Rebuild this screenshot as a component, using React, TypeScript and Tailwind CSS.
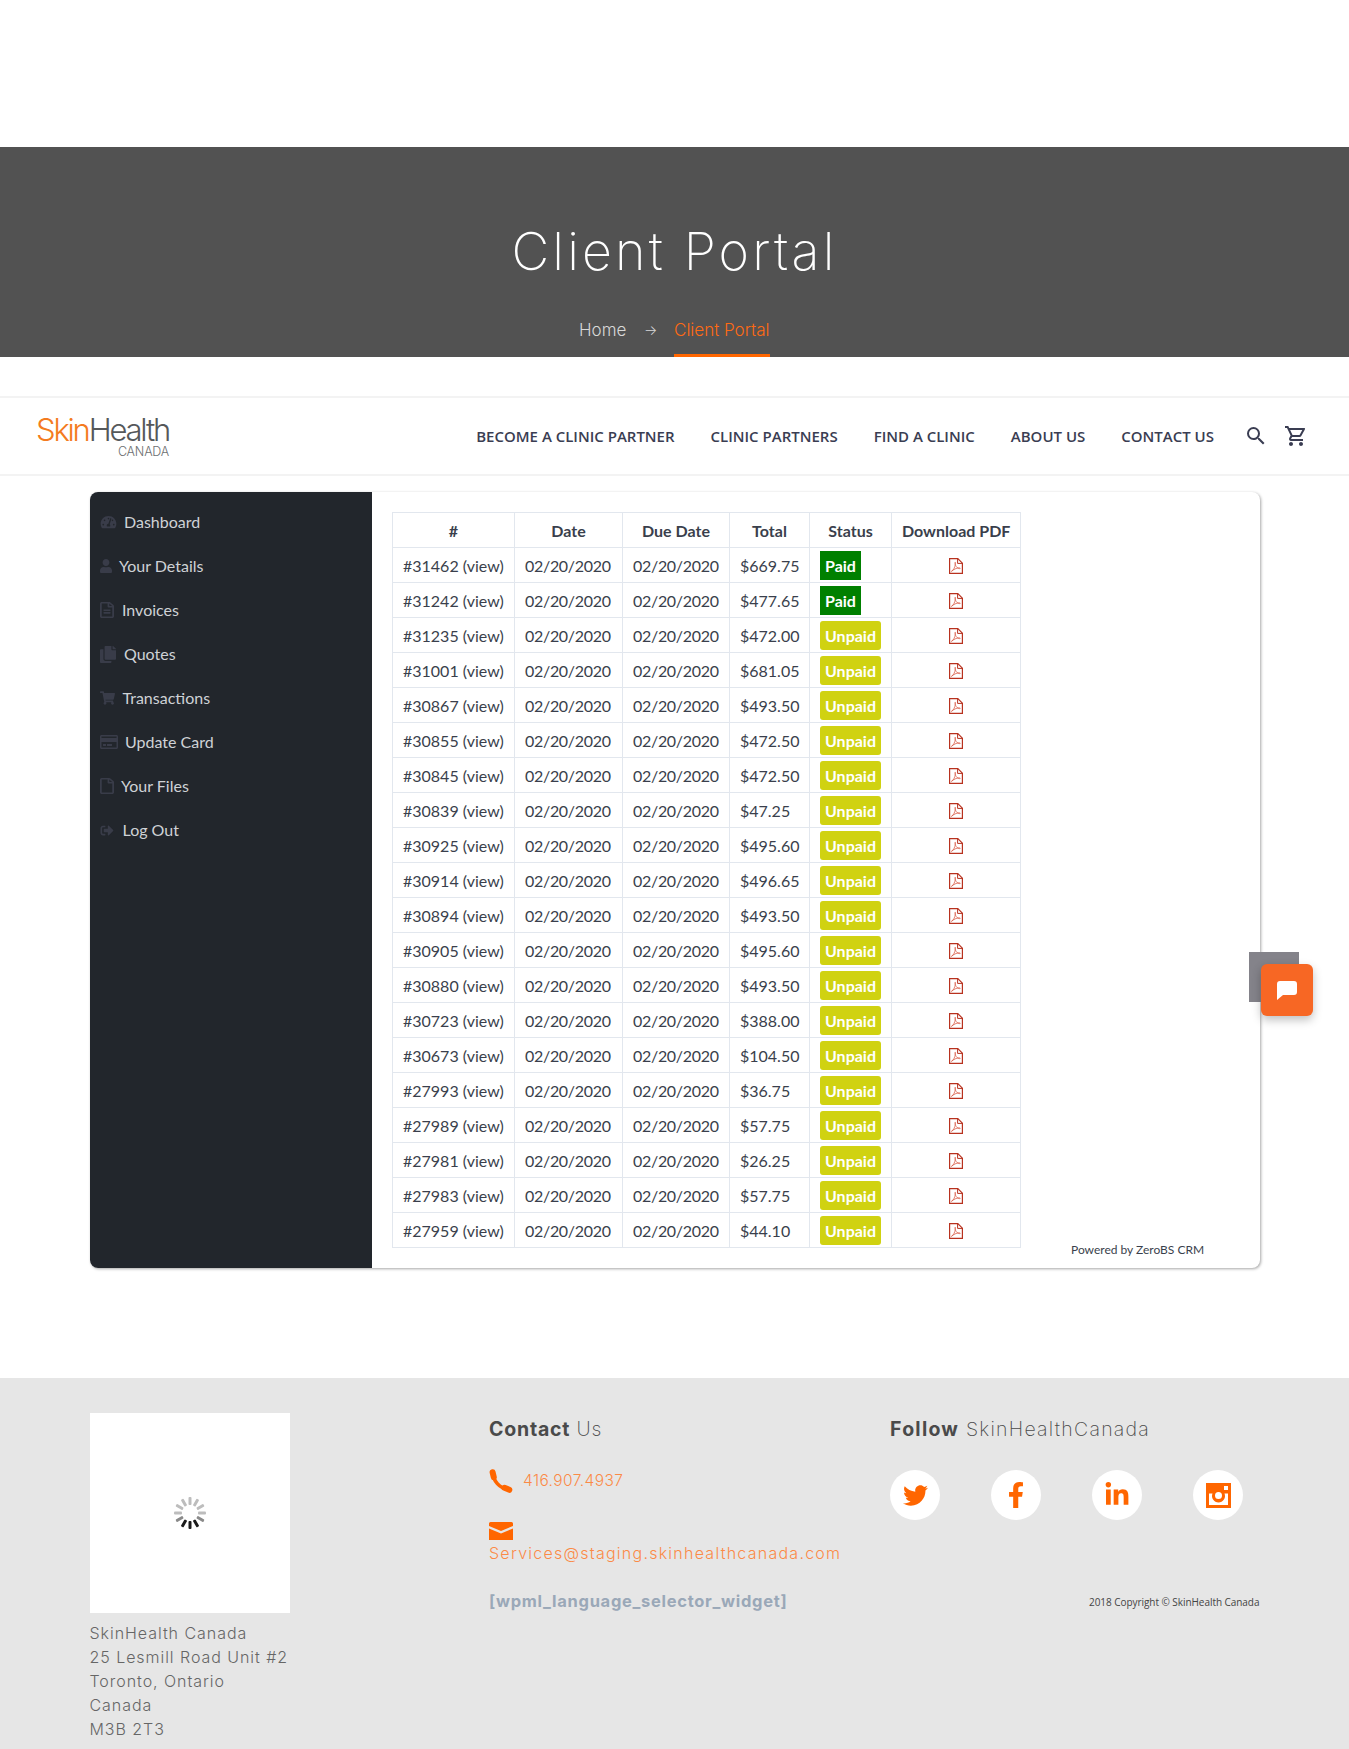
import React from 'react';
import {
  FaTachometerAlt, FaUser, FaRegFileAlt, FaCopy, FaShoppingCart, FaRegCreditCard, FaRegFile,
  FaSignOutAlt, FaTwitter, FaFacebookF, FaLinkedinIn,
} from 'react-icons/fa';
import { MdSearch, MdOutlineShoppingCart } from 'react-icons/md';

const poppins = 'font-["Inter",sans-serif]';

const menu = [
  { label: 'Dashboard', icon: <FaTachometerAlt className="w-[17px] h-[14px]" />, slot: 'w-[24px]' },
  { label: 'Your Details', icon: <FaUser className="w-[12px] h-[14px]" preserveAspectRatio="none" />, slot: 'w-[19px]' },
  { label: 'Invoices', icon: <FaRegFileAlt className="w-[14px] h-[16px]" preserveAspectRatio="none" />, slot: 'w-[22px]' },
  { label: 'Quotes', icon: <FaCopy className="w-[16px] h-[17px]" preserveAspectRatio="none" />, slot: 'w-[24px]' },
  { label: 'Transactions', icon: <FaShoppingCart className="w-[15px] h-[14px]" />, slot: 'w-[22.5px]' },
  { label: 'Update Card', icon: <FaRegCreditCard className="w-[18px] h-[16px]" />, slot: 'w-[25px]' },
  { label: 'Your Files', icon: <FaRegFile className="w-[14px] h-[16px]" preserveAspectRatio="none" />, slot: 'w-[21px]' },
  { label: 'Log Out', icon: <FaSignOutAlt className="w-[14px] h-[13px]" />, slot: 'w-[22.5px]' },
];

const invoices: [string, string, boolean][] = [
  ['#31462', '$669.75', true],
  ['#31242', '$477.65', true],
  ['#31235', '$472.00', false],
  ['#31001', '$681.05', false],
  ['#30867', '$493.50', false],
  ['#30855', '$472.50', false],
  ['#30845', '$472.50', false],
  ['#30839', '$47.25', false],
  ['#30925', '$495.60', false],
  ['#30914', '$496.65', false],
  ['#30894', '$493.50', false],
  ['#30905', '$495.60', false],
  ['#30880', '$493.50', false],
  ['#30723', '$388.00', false],
  ['#30673', '$104.50', false],
  ['#27993', '$36.75', false],
  ['#27989', '$57.75', false],
  ['#27981', '$26.25', false],
  ['#27983', '$57.75', false],
  ['#27959', '$44.10', false],
];

const cell = 'border border-[#e2e7ee] px-[10px] pt-[2px] pb-0 h-[35px] whitespace-nowrap';

const Spinner = () => (
  <svg width="34" height="34" viewBox="-17 -17 34 34" aria-hidden="true">
    {Array.from({ length: 12 }).map((_, i) => {
      const dark = i >= 5 && i <= 7;
      return (
        <rect
          key={i}
          x="-1.5"
          y="-16"
          width="3"
          height="8"
          rx="1"
          transform={`rotate(${i * 30})`}
          fill={dark ? '#1c1c1c' : i === 4 || i === 8 ? '#8a8a8a' : '#bdbdbd'}
        />
      );
    })}
  </svg>
);

const PdfIcon = () => (
  <svg className="mx-auto block" width="14" height="16" viewBox="0 0 14 16" fill="none" aria-hidden="true">
    <path d="M.6.6h8.2l4.6 4.6v10.2H.6z" stroke="#b8321f" strokeWidth="1.2" />
    <path d="M8.6.8v4.6h4.6" stroke="#b8321f" strokeWidth="1" />
    <path d="M2.4 13.4c2-1.2 3.6-4 4-7.6.1-1 .1-1.600-.2-1.600-.4 0-.3 1.600.4 3.200.8 1.800 2.200 3 3.900 3.200 1 .1 1.100-.6.2-.7-2.200-.2-5 .7-8.300 3.500z" stroke="#d9604a" strokeWidth=".8" />
  </svg>
);

const App: React.FC = () => {
  return (
    <div className="relative w-[1349px] h-[1749px] overflow-hidden bg-white font-['Lato',sans-serif] text-[#3a3f4c]">
      <div className="h-[147px]" />

      {/* Banner */}
      <section className="h-[210px] bg-[#525252] flex flex-col items-center">
        <h1 className={`mt-[65px] h-[80px] leading-[80px] text-[52px] font-extralight tracking-[3.15px] text-white ${poppins}`}>
          Client Portal
        </h1>
        <div className={`mt-[25px] h-[40px] flex text-[17px] font-light ${poppins}`}>
          <span className="text-[#d8d8d8] leading-[26px] w-[65px]">Home</span>
          <span className="text-[#d8d8d8] leading-[26px] w-[30px] text-[14px]">→</span>
          <span className="text-[#ff6a13] leading-[26px] w-[96px] border-b-[3px] border-[#ff6600] whitespace-nowrap">Client Portal</span>
        </div>
      </section>

      {/* Header */}
      <header className="mt-[39px] h-[80px] border-y-2 border-[#f3f3f3] flex items-center pl-[37px] pr-[41px]">
        <div className={`w-[132px] flex flex-col items-end leading-none ${poppins}`}>
          <div className="text-[31px] h-[31px] font-light tracking-[-2.2px] whitespace-nowrap">
            <span className="text-[#f47b20]">Skin</span>
            <span className="text-[#55585a]">Health</span>
          </div>
          <div className="text-[12.5px] font-light text-[#6d6f71] mt-[1px] tracking-[-0.2px]">CANADA</div>
        </div>
        <nav className="ml-auto flex items-center gap-[36px] font-['Open_Sans',sans-serif] text-[15px] font-semibold text-[#3a3d52] whitespace-nowrap">
          <span>BECOME A CLINIC PARTNER</span>
          <span>CLINIC PARTNERS</span>
          <span>FIND A CLINIC</span>
          <span>ABOUT US</span>
          <span>CONTACT US</span>
        </nav>
        <MdSearch className="ml-[30px] w-[24px] h-[24px] text-[#3a3d52]" />
        <MdOutlineShoppingCart className="ml-[16px] w-[24px] h-[24px] text-[#3a3d52]" />
      </header>

      {/* Portal card */}
      <main className="mt-[16px] ml-[90px] w-[1170px] h-[776px] flex rounded-lg bg-white shadow-[1px_1px_3px_rgba(0,0,0,0.35)]">
        <aside className="w-[282px] shrink-0 bg-[#22262c] rounded-l-lg pt-[8px] pl-[10px] text-[16px] text-[#cfd2d6]">
          {menu.map(item => (
            <div key={item.label} className="h-[44px] flex items-center">
              <span className={`${item.slot} text-[#393c49] flex items-center`}>{item.icon}</span>
              <span>{item.label}</span>
            </div>
          ))}
        </aside>
        <div className="flex-1 pl-[20px] pb-[10px] flex items-end">
          <table className="table-fixed w-[628px] mb-[10px] border-collapse text-[16px]">
            <thead>
              <tr className="font-bold text-center">
                <th className={`${cell} w-[122px]`}>#</th>
                <th className={`${cell} w-[108px]`}>Date</th>
                <th className={`${cell} w-[107px]`}>Due Date</th>
                <th className={`${cell} w-[80px]`}>Total</th>
                <th className={`${cell} w-[82px]`}>Status</th>
                <th className={`${cell} w-[129px]`}>Download PDF</th>
              </tr>
            </thead>
            <tbody>
              {invoices.map(([id, total, paid]) => (
                <tr key={id}>
                  <td className={cell}>{id} (view)</td>
                  <td className={`${cell} tracking-[-0.3px]`}>02/20/2020</td>
                  <td className={`${cell} tracking-[-0.3px]`}>02/20/2020</td>
                  <td className={cell}>{total}</td>
                  <td className={cell}>
                    {paid ? (
                      <span className="inline-block -translate-y-[1px] h-[29px] leading-[29px] px-[5px] font-bold text-white bg-[#008000] align-middle">Paid</span>
                    ) : (
                      <span className="inline-block -translate-y-[1px] h-[29px] leading-[29px] px-[5px] font-bold text-white bg-[#d0d211] rounded-[3px] align-middle">Unpaid</span>
                    )}
                  </td>
                  <td className={cell}>
                    <PdfIcon />
                  </td>
                </tr>
              ))}
            </tbody>
          </table>
          <span className="ml-[50px] text-[12px] leading-[16px] whitespace-nowrap">Powered by ZeroBS CRM</span>
        </div>
      </main>

      {/* Footer */}
      <footer className={`mt-[110px] h-[371px] bg-[#e6e6e6] pl-[90px] pt-[35px] grid grid-cols-[399px_401px_370px] ${poppins}`}>
        <div>
          <div className="w-[200px] h-[200px] bg-white flex items-center justify-center">
            <Spinner />
          </div>
          <div className="mt-[8px] -ml-[0.5px] text-[16px] leading-[24px] font-light tracking-[0.95px] text-[#666]">
            <div>SkinHealth Canada</div>
            <div>25 Lesmill Road Unit #2</div>
            <div>Toronto, Ontario</div>
            <div>Canada</div>
            <div>M3B 2T3</div>
          </div>
        </div>

        <div>
          <h3 className="mt-[1px] text-[19.5px] leading-[30px] text-[#4a4a4a] tracking-[0.8px]">
            <span className="font-bold">Contact</span> <span className="font-extralight">Us</span>
          </h3>
          <div className="mt-[25px] flex items-center h-[24px]">
            <svg width="24" height="24" viewBox="0 0 24 24" fill="none" aria-hidden="true">
              <path d="M3.500 3.500C4.500 12 10 19 19.500 20.500" stroke="#ff6600" strokeWidth="3.600" strokeLinecap="round" />
              <path d="M3.600 3.200l1.200 5" stroke="#ff6600" strokeWidth="6" strokeLinecap="round" />
              <path d="M15.500 18.800l4.800 2" stroke="#ff6600" strokeWidth="6" strokeLinecap="round" />
            </svg>
            <span className="ml-[10px] text-[15.5px] font-light text-[#fb8a46] tracking-[0.4px]">416.907.4937</span>
          </div>
          <svg className="mt-[29px] block" width="24" height="18" viewBox="0 0 24 18" aria-hidden="true">
            <path d="M1.500 0h21A1.500 1.500 0 0 1 24 1.500V4l-12 5L0 4V1.500A1.500 1.500 0 0 1 1.500 0z" fill="#ff6600" />
            <path d="M0 6.500l12 5 12-5V18H0z" fill="#ff6600" />
          </svg>
          <div className="mt-[1px] text-[16px] leading-[24px] font-light text-[#fb8a46] tracking-[1.25px] whitespace-nowrap">
            Services@staging.skinhealthcanada.com
          </div>
          <div className="mt-[24px] text-[16.5px] leading-[24px] font-bold text-[#9aa8b8] tracking-[0.7px] whitespace-nowrap">
            [wpml_language_selector_widget]
          </div>
        </div>

        <div>
          <h3 className="mt-[1px] text-[19.5px] leading-[30px] text-[#4a4a4a] tracking-[1.25px] whitespace-nowrap">
            <span className="font-bold">Follow</span> <span className="font-extralight">SkinHealthCanada</span>
          </h3>
          <div className="mt-[26px] flex gap-[51px]">
            <span className="w-[50px] h-[50px] rounded-full bg-white flex items-center justify-center text-[#ff6600]">
              <FaTwitter className="w-[25px] h-[25px]" />
            </span>
            <span className="w-[50px] h-[50px] rounded-full bg-white flex items-center justify-center text-[#ff6600]">
              <FaFacebookF className="w-[26px] h-[26px]" />
            </span>
            <span className="w-[50px] h-[50px] rounded-full bg-white flex items-center justify-center text-[#ff6600]">
              <FaLinkedinIn className="w-[26px] h-[26px]" />
            </span>
            <span className="w-[50px] h-[50px] rounded-full bg-white flex items-center justify-center">
              <svg width="25" height="25" viewBox="0 0 25 25" aria-hidden="true">
                <path fillRule="evenodd" fill="#ff6600" d="M0 0h25v25H0zM18 3v4h4V3zM3 10.500V22h19V10.500h-3.500a6.500 6.500 0 1 1-12 0zM12.500 9a3.500 3.500 0 1 0 0 7 3.500 3.500 0 0 0 0-7z" />
              </svg>
            </span>
          </div>
          <div className="mt-[75px] ml-[199px] font-['Open_Sans',sans-serif] text-[10px] leading-[14px] tracking-[-0.05px] text-[#444] whitespace-nowrap">
            2018 Copyright © SkinHealth Canada
          </div>
        </div>
      </footer>

      {/* Floating chat button */}
      <div className="absolute left-[1249px] top-[952px] w-[50px] h-[50px] bg-[#84838a]" />
      <div className="absolute left-[1261px] top-[964px] w-[52px] h-[52px] rounded-md bg-[#f76724] shadow-[0_4px_10px_rgba(0,0,0,0.25)] flex items-center justify-center">
        <svg width="20" height="19" viewBox="0 0 20 19" aria-hidden="true">
          <path fill="#fff" d="M3 0h14a3 3 0 0 1 3 3v8a3 3 0 0 1-3 3H6l-6 5V3a3 3 0 0 1 3-3z" />
        </svg>
      </div>
    </div>
  );
};

export default App;
